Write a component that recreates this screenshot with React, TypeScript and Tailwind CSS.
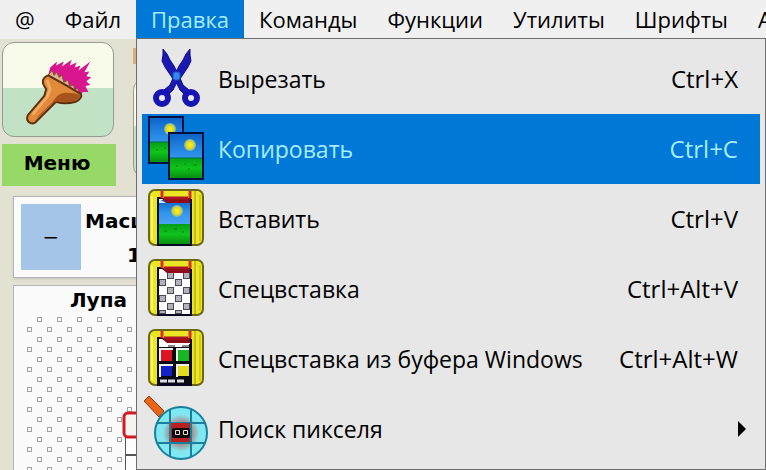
import type { ReactNode } from "react";
import clsx from "clsx";

interface MenuRowProps {
  icon: ReactNode;
  label: string;
  shortcut?: string;
  active?: boolean;
  submenu?: boolean;
}

const TABS = [
  "@",
  "Файл",
  "Правка",
  "Команды",
  "Функции",
  "Утилиты",
  "Шрифты",
  "А",
];

// shared by all the menu icons
function Gradients() {
  return (
    <svg className="absolute size-0" aria-hidden="true">
      <defs>
        <linearGradient id="sky" x1="0" y1="0" x2="0" y2="1">
          <stop offset="0" stopColor="#0b62c8" />
          <stop offset="0.5" stopColor="#2f93ec" />
          <stop offset="1" stopColor="#4aa4f0" />
        </linearGradient>
        <linearGradient id="grass" x1="0" y1="0" x2="0" y2="1">
          <stop offset="0" stopColor="#04a016" />
          <stop offset="0.5" stopColor="#0fc41c" />
          <stop offset="1" stopColor="#078f10" />
        </linearGradient>
        <radialGradient id="sun">
          <stop offset="0" stopColor="#fff21a" />
          <stop offset="0.6" stopColor="#e0d828" />
          <stop offset="1" stopColor="#6fb0b0" />
        </radialGradient>
        <radialGradient id="lens">
          <stop offset="0" stopColor="#a02c2c" />
          <stop offset="0.4" stopColor="#a88484" />
          <stop offset="0.7" stopColor="#86e4ec" />
          <stop offset="1" stopColor="#78ecf8" />
        </radialGradient>
      </defs>
    </svg>
  );
}

function ScissorsIcon() {
  return (
    <svg viewBox="0 0 60 70" className="h-full w-full overflow-visible">
      <g fill="#1a19b4" stroke="#100e86" strokeLinejoin="round">
        <path d="M21 5 L25 10 L28 16 L32 22 L35 28 L38 34 L41 41 L47 46 L43 51 L38 46 L35 40 L31 35 L27 29 L23 23 L20 17 L21 11 Z" />
        <path d="M48 5 L44 10 L41 16 L37 22 L34 28 L31 34 L28 41 L22 46 L26 51 L31 46 L34 40 L38 35 L42 29 L46 23 L49 17 L48 11 Z" />
      </g>
      <circle cx="20" cy="54" r="6" fill="#ecebf2" stroke="#1714b4" strokeWidth="6" />
      <circle cx="49" cy="54" r="6" fill="#ecebf2" stroke="#1714b4" strokeWidth="6" />
      <rect x="31" y="28" width="7" height="8" rx="2" fill="#3488ea" stroke="#1a4cc8" />
    </svg>
  );
}

function Landscape({ x, y }: { x: number; y: number }) {
  return (
    <g transform={`translate(${x} ${y})`}>
      <rect x="1" y="1" width="34" height="46" fill="url(#sky)" stroke="#06103f" strokeWidth="2" />
      <rect x="2" y="26" width="32" height="20" fill="url(#grass)" />
      <path d="M2 26 H34" stroke="#056a3c" />
      <path d="M8 34h2M16 32h2M26 33h3M20 37h2" stroke="#077a10" />
      <circle cx="22" cy="13" r="6" fill="url(#sun)" />
    </g>
  );
}

function CopyIcon() {
  return (
    <svg viewBox="0 0 60 70" className="h-full w-full overflow-visible">
      <Landscape x={6} y={2} />
      <Landscape x={26} y={18} />
    </svg>
  );
}

function Clipboard({ children }: { children: ReactNode }) {
  return (
    <svg viewBox="0 0 60 70" className="h-full w-full overflow-visible">
      <rect
        x="7"
        y="6"
        width="54"
        height="55"
        rx="6"
        fill="#ece524"
        stroke="#6b6812"
        strokeWidth="2"
      />
      <path d="M10 12 V56" stroke="#f8f470" strokeWidth="2" />
      <path d="M53 7 V60" stroke="#c4be1c" strokeWidth="2" />
      <path d="M58 11 V57" stroke="#d2cc20" strokeWidth="2" />
      <path d="M15 15 H50 V61 H15 Z" fill="#fff" />
      {children}
      <path d="M16 14 H49 V19 H25 L20 15 Z" fill="#8f0d18" />
      <path d="M16 14 V61 H49 V15" fill="none" stroke="#080824" strokeWidth="2" />
      <path d="M15 14 H21" stroke="#080824" strokeWidth="2" />
      <path d="M20 7 V14 M48 7 V14" stroke="#d8301c" strokeWidth="3" />
      <path d="M22 14 H46" stroke="#a81420" strokeWidth="3" />
    </svg>
  );
}

function PasteIcon() {
  return (
    <Clipboard>
      <rect x="17" y="16" width="31" height="24" fill="url(#sky)" />
      <rect x="17" y="40" width="31" height="20" fill="url(#grass)" />
      <path d="M22 47h3M32 45h3M40 48h2" stroke="#077a10" />
      <circle cx="35" cy="27" r="6" fill="url(#sun)" />
      <path d="M17 15 L24 19 H17 Z" fill="#cfe6fa" />
    </Clipboard>
  );
}

function PatternIcon() {
  const cells = [
    [25, 18], [41, 18], [17, 25], [33, 25], [25, 33], [41, 33],
    [17, 41], [33, 41], [25, 49], [41, 49], [17, 56], [33, 56],
  ];
  return (
    <Clipboard>
      <rect x="17" y="16" width="31" height="44" fill="#fff" />
      {cells.map(([x, y]) => (
        <rect
          key={`${x}-${y}`}
          x={x + 0.5}
          y={y + 0.5}
          width="6"
          height={y > 50 ? 3 : 6}
          fill="#b4b1bc"
          stroke="#4a4754"
        />
      ))}
    </Clipboard>
  );
}

function WindowsIcon() {
  return (
    <Clipboard>
      <path d="M17 20 H48 V60 H17 Z" fill="#0a0a12" />
      <path d="M17 16 L26 19 H47 V23 H17 Z" fill="#fff" />
      <path d="M26 22h7M40 22h7" stroke="#8b8794" strokeWidth="2" />
      <path
        d="M18 37 V25 H31 M35 37 V25 H47 M18 53 V41 H31 M35 53 V41 H47"
        stroke="#f0f0f0"
        strokeWidth="2"
        fill="none"
      />
      <rect x="19" y="26" width="11" height="11" fill="#dc1423" />
      <rect x="36" y="26" width="11" height="11" fill="#18b824" />
      <rect x="19" y="42" width="11" height="10" fill="#1420c8" />
      <rect x="36" y="42" width="11" height="10" fill="#e4dc20" />
      <path d="M18 57h7M26 57h7M35 57h7" stroke="#dcdce6" strokeWidth="3" />
    </Clipboard>
  );
}

function LensIcon() {
  return (
    <svg viewBox="0 0 60 70" className="h-full w-full overflow-visible">
      <path d="M2 7 L7 2 L22 17 L17 23 Z" fill="#ec6416" stroke="#8a3a12" />
      <circle cx="39" cy="39" r="26" fill="url(#lens)" stroke="#1a7f9c" strokeWidth="2" />
      <path
        d="M28 15 V63 M49 15 V63 M15 29 H63 M15 49 H63"
        stroke="#1a7f9c"
        strokeWidth="2"
      />
      <rect x="29" y="29" width="19" height="19" fill="#b42222" />
      <rect x="30" y="34" width="18" height="10" rx="2" fill="#120808" />
      <path d="M33.500 36.500h4v4h-4zM41.500 36.500h4v4h-4z" fill="none" stroke="#eadede" />
    </svg>
  );
}

function BrushIcon() {
  return (
    <svg viewBox="0 0 112 95" className="h-full w-full">
      <path
        d="M46 33 L48 25 L55 19 L54 23 L62 19 L60 24 L70 17 L68 23 L75 20 L73 25 L79 23 L77 28 L89 19 L83 30 L88 29 L85 34 L90 35 L85 39 L89 43 L84 44 L87 50 L81 50 L80 54 L74 50 L60 40 Z"
        fill="#d8148e"
      />
      <path
        d="M46 33 L50 28 L52 33 L55 30 L57 35 L60 33 L62 40 L66 38 L68 44 L72 43 L73 48 L76 46 L78 53 L74 55 Z"
        fill="#dcb48e"
        stroke="#8a5230"
      />
      <path
        d="M46 33 C38 36 40 42 44 47 L42 54 L25 74 C23 80 28 84 33 81 L54 60 C60 62 67 62 74 60 C79 58 81 54 79 52 L64 43 Z"
        fill="#e08a3a"
        stroke="#5c3010"
        strokeWidth="2"
        strokeLinejoin="round"
      />
      <path d="M53 57 C58 49 67 50 79 53 C78 58 70 61 62 60 C57 59 53 59 48 64 L33 79 C38 71 46 66 53 57 Z" fill="#a8531c" />
      <path d="M45 38 L48 47 L45 55 L30 73" fill="none" stroke="#f3ab62" strokeWidth="3" />
    </svg>
  );
}

function DotGrid() {
  return (
    <svg width="124" height="160" className="block shrink-0">
      <g fill="#fafafa" stroke="#a2a2a2">
        {Array.from({ length: 16 }, (_, row) =>
          Array.from({ length: row % 2 ? 6 : 5 }, (_, col) => (
            <rect
              key={`${row}-${col}`}
              x={(row % 2 ? 13.5 : 23.5) + col * 20}
              y={3.5 + row * 10}
              width="4"
              height="4"
            />
          )),
        )}
      </g>
      <path d="M111.500 160 V122 H124 V160" fill="#fdfdfd" stroke="#555" />
      <path d="M112 141 H124" stroke="#555" strokeWidth="2" />
      <rect x="110" y="99" width="30" height="24" rx="4" fill="#f7f3f3" stroke="#d01c24" strokeWidth="3" />
    </svg>
  );
}

function MenuRow({ icon, label, shortcut, active, submenu }: MenuRowProps) {
  return (
    <li>
      <button
        type="button"
        className={clsx(
          "flex h-[70px] w-full items-center text-left text-[23px] leading-8",
          active ? "bg-[#0078d7] text-[#a9ecff]" : "text-black",
        )}
      >
        <span className="h-[70px] w-[60px] shrink-0">{icon}</span>
        <span className="ml-4 flex-1 whitespace-nowrap">{label}</span>
        {shortcut && (
          <span className="mr-[22px] text-2xl whitespace-nowrap">{shortcut}</span>
        )}
        {submenu && (
          <svg viewBox="0 0 8 16" className="mr-3.5 h-4 w-2">
            <path d="M0 0 L8 8 L0 16 Z" fill="#000" />
          </svg>
        )}
      </button>
    </li>
  );
}

export default function App() {
  return (
    <div className="relative flex h-screen flex-col overflow-hidden bg-[#e3e1d2] font-['Open_Sans','Noto_Sans',sans-serif]">
      <Gradients />
      <nav className="flex h-[39px] shrink-0 overflow-hidden bg-[#f0f0f0]">
        {TABS.map((tab) => (
          <button
            key={tab}
            type="button"
            className={clsx(
              "h-full shrink-0 px-[15px] pb-0.5 text-[22px] leading-8 whitespace-nowrap",
              tab === "Правка" ? "bg-[#0078d7] text-[#a9ecff]" : "text-black",
            )}
          >
            {tab}
          </button>
        ))}
      </nav>

      <main className="flex min-h-0 flex-1 flex-col font-['DejaVu_Sans',sans-serif] text-xl font-bold text-black">
        <div className="flex gap-[17px] pt-[3px] pl-0.5">
          <div className="w-[114px] shrink-0">
            <button
              type="button"
              aria-label="Кисть"
              className="block h-[95px] w-28 rounded-xl border border-[#979c92] bg-linear-to-b from-[#f8faea] from-48% to-[#c2e2c6] to-48%"
            >
              <BrushIcon />
            </button>
            <button
              type="button"
              className="mt-[7px] h-[42px] w-full bg-[#97d966] pr-1 pb-1"
            >
              Меню
            </button>
          </div>
          <div className="flex-1 pt-1.5">
            <div className="h-4 w-20 bg-[#d9ae7c]" />
            <div className="mt-3.5 h-[100px] w-28 rounded-xl border border-[#979c92] bg-linear-to-b from-[#f8faea] from-48% to-[#c2e2c6] to-48%" />
          </div>
        </div>

        <section className="mt-2.5 ml-[13px] flex h-[82px] shrink-0 border border-[#b5b6bb] bg-[#fbfbfb] p-[7px] shadow-sm">
          <button
            type="button"
            className="h-[66px] w-[60px] shrink-0 bg-[#a4c4e8] font-normal"
          >
            −
          </button>
          <div className="ml-1 w-16 text-right leading-[34px]">
            <div>Масш</div>
            <div className="pr-2">1</div>
          </div>
        </section>

        <section className="mt-[7px] ml-[13px] flex-1 border border-[#b5b6bb] bg-[#fbfbfb]">
          <h2 className="ml-14 leading-7">Лупа</h2>
          <DotGrid />
        </section>
      </main>

      <ul className="absolute top-[38px] right-0 bottom-0 left-[136px] border border-[#6e6e6e] bg-[#e8e7e7] p-[5px]">
        <MenuRow icon={<ScissorsIcon />} label="Вырезать" shortcut="Ctrl+X" />
        <MenuRow icon={<CopyIcon />} label="Копировать" shortcut="Ctrl+C" active />
        <MenuRow icon={<PasteIcon />} label="Вставить" shortcut="Ctrl+V" />
        <MenuRow icon={<PatternIcon />} label="Спецвставка" shortcut="Ctrl+Alt+V" />
        <MenuRow
          icon={<WindowsIcon />}
          label="Спецвставка из буфера Windows"
          shortcut="Ctrl+Alt+W"
        />
        <MenuRow icon={<LensIcon />} label="Поиск пикселя" submenu />
      </ul>
    </div>
  );
}
